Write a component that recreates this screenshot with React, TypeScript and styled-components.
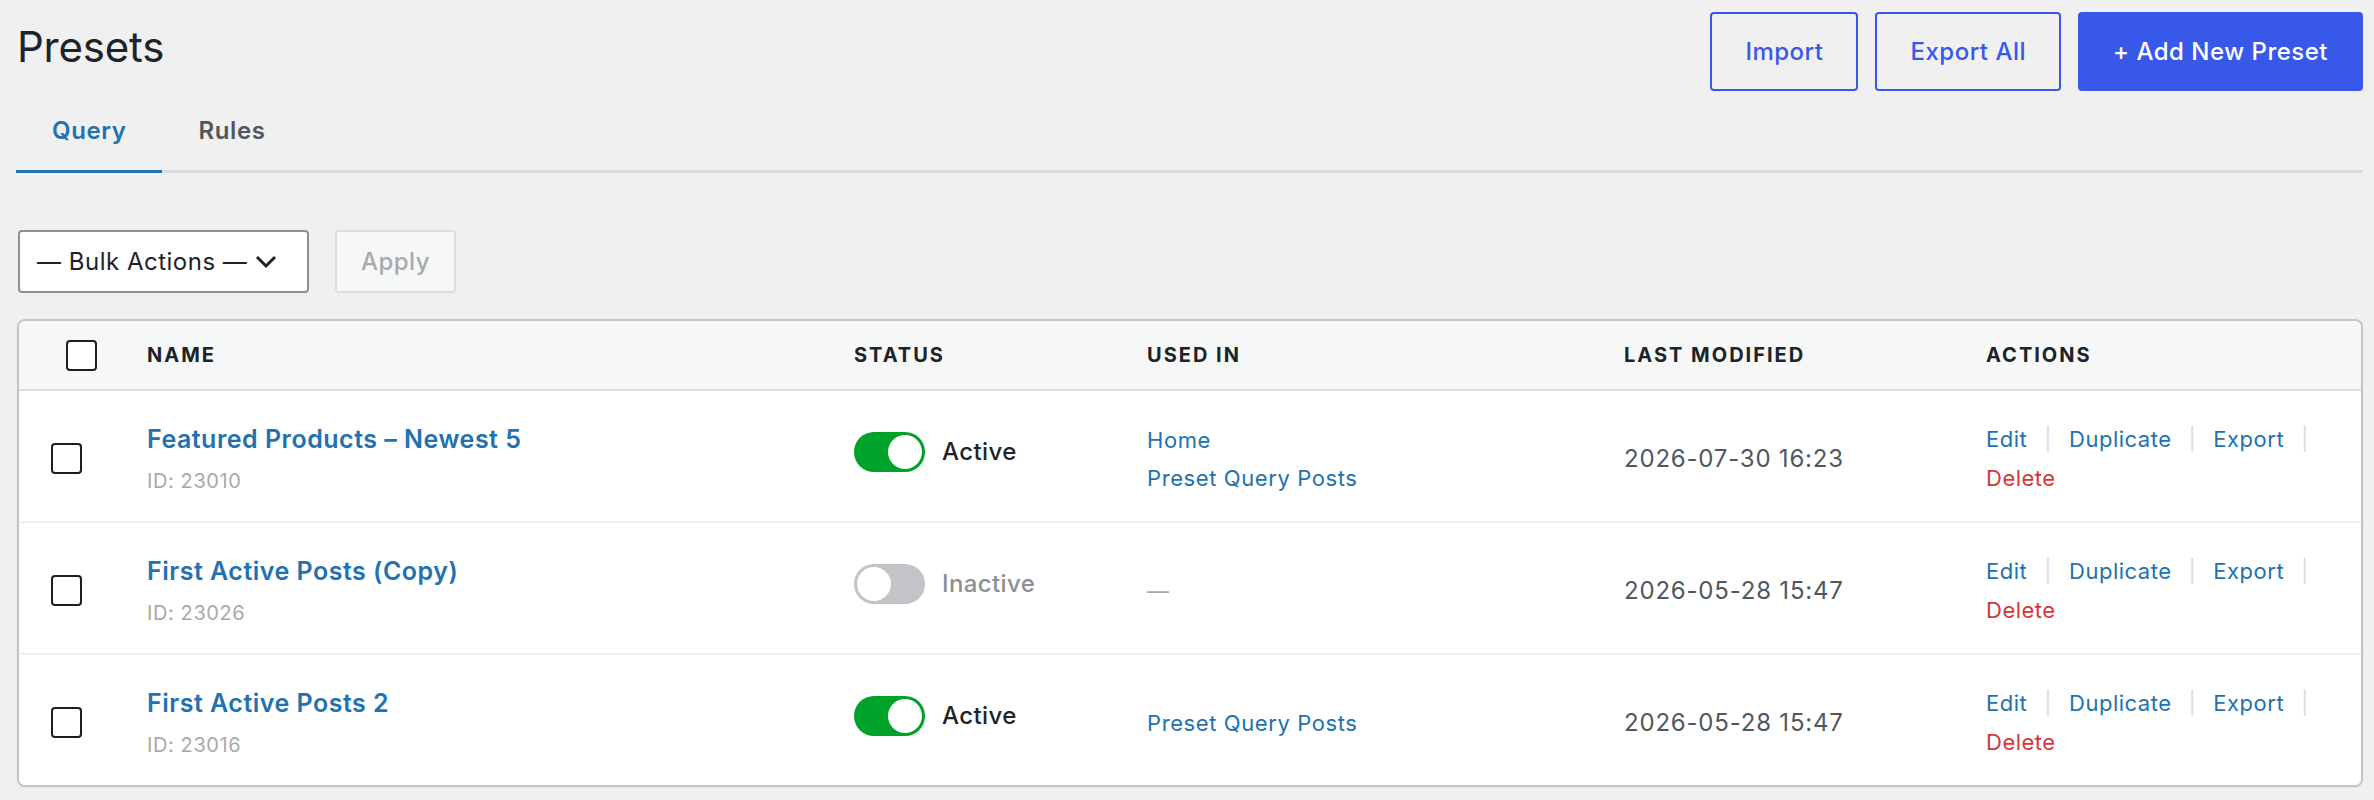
import React from 'react';
import styled, { createGlobalStyle } from 'styled-components';

const GlobalStyle = createGlobalStyle`
  html, body {
    margin: 0;
    padding: 0;
    background: #f0f0f1;
  }
  body {
    font-family: Inter, 'Noto Sans', 'Liberation Sans', sans-serif;
    color: #1d2327;
  }
  * {
    box-sizing: border-box;
  }
`;

const Root = styled.div`
  padding: 12px 11px 12px 16px;
`;

const TopBar = styled.div`
  display: flex;
  justify-content: space-between;
  align-items: flex-start;
`;

const Title = styled.h1`
  margin: 10px 0 0 1px;
  font-size: 42px;
  line-height: 50px;
  font-weight: 400;
  color: #1d2327;
  letter-spacing: -0.2px;
`;

const ButtonGroup = styled.div`
  display: flex;
  gap: 17px;
`;

const Button = styled.button<{ $primary?: boolean }>`
  height: 79px;
  padding: 0 33px;
  border: 2px solid #3858e9;
  border-radius: 4px;
  background: ${p => (p.$primary ? '#3858e9' : 'transparent')};
  color: ${p => (p.$primary ? '#ffffff' : '#3858e9')};
  font-family: inherit;
  font-size: 24px;
  font-weight: 500;
  letter-spacing: 0.5px;
  cursor: pointer;
`;

const TabBar = styled.div`
  display: flex;
  border-bottom: 3px solid #dcdcde;
`;

const Tab = styled.div<{ $active?: boolean }>`
  padding: 24px 36px 23px;
  line-height: 32px;
  font-size: 24px;
  font-weight: 600;
  letter-spacing: 0.6px;
  color: ${p => (p.$active ? '#2271b1' : '#50575e')};
  border-bottom: 3px solid ${p => (p.$active ? '#2271b1' : 'transparent')};
  margin-bottom: -3px;
`;

const Toolbar = styled.div`
  display: flex;
  gap: 26px;
  margin-top: 57px;
  margin-left: 2px;
`;

const BulkSelect = styled.div`
  width: 291px;
  height: 63px;
  display: flex;
  align-items: center;
  gap: 8px;
  padding: 0 17px;
  background: #ffffff;
  border: 2px solid #8c8f94;
  border-radius: 4px;
  font-size: 24px;
  letter-spacing: 0.5px;
  color: #1d2327;
`;

const ApplyButton = styled.button`
  width: 121px;
  height: 63px;
  border: 2px solid #dcdcde;
  border-radius: 4px;
  background: #f6f7f7;
  color: #a7aaad;
  font-family: inherit;
  font-size: 24px;
  font-weight: 500;
  letter-spacing: 0.5px;
`;

const Table = styled.div`
  margin-top: 26px;
  margin-left: 1px;
  border: 2px solid #c3c4c7;
  border-radius: 8px;
  overflow: hidden;
  background: #ffffff;
  box-shadow: 0 1px 2px rgba(0, 0, 0, 0.05);
`;

const Row = styled.div<{ $head?: boolean }>`
  display: grid;
  grid-template-columns: 128px 707px 293px 477px 362px 1fr;
  align-items: center;
  min-height: ${p => (p.$head ? '70px' : '132px')};
  padding-top: ${p => (p.$head ? '0' : '5px')};
  background: ${p => (p.$head ? '#f6f7f7' : '#ffffff')};
  border-bottom: 2px solid ${p => (p.$head ? '#dcdcde' : '#f0f0f1')};

  &:last-child {
    border-bottom: none;
    min-height: 130px;
  }
`;

const HeadCell = styled.div`
  font-size: 20px;
  font-weight: 700;
  letter-spacing: 2px;
  color: #1d2327;
`;

const Checkbox = styled.span<{ $offset: number }>`
  display: block;
  width: 31px;
  height: 31px;
  margin-left: ${p => p.$offset}px;
  border: 2px solid #1e1e1e;
  border-radius: 4px;
  background: #ffffff;
`;

const NameCell = styled.div`
  display: flex;
  flex-direction: column;
  gap: 12px;
`;

const NameLink = styled.a`
  font-size: 25px;
  line-height: 32px;
  font-weight: 600;
  letter-spacing: 0.5px;
  color: #2271b1;
  text-decoration: none;
`;

const IdText = styled.span`
  font-size: 20px;
  line-height: 28px;
  letter-spacing: 0.6px;
  color: #a7aaad;
`;

const StatusCell = styled.div`
  display: flex;
  align-items: center;
  gap: 17px;
  margin-bottom: 14px;
`;

const Toggle = styled.span<{ $on: boolean }>`
  display: flex;
  justify-content: ${p => (p.$on ? 'flex-end' : 'flex-start')};
  align-items: center;
  width: 71px;
  height: 40px;
  padding: 0 3px;
  border-radius: 20px;
  background: ${p => (p.$on ? '#00a32a' : '#c3c4c7')};
`;

const Knob = styled.span`
  width: 34px;
  height: 34px;
  border-radius: 50%;
  background: #ffffff;
`;

const StatusLabel = styled.span<{ $on: boolean }>`
  font-size: 24px;
  font-weight: 500;
  letter-spacing: 0.4px;
  color: ${p => (p.$on ? '#1d2327' : '#8c8f94')};
`;

const UsedList = styled.div`
  display: flex;
  flex-direction: column;
  font-size: 22px;
  line-height: 38px;
  letter-spacing: 0.6px;
`;

const TextLink = styled.a<{ $danger?: boolean }>`
  color: ${p => (p.$danger ? '#d63638' : '#2271b1')};
  text-decoration: none;
`;

const Dash = styled.span`
  color: #a7aaad;
`;

const DateText = styled.div`
  font-size: 24px;
  color: #50575e;
  letter-spacing: 0.8px;
`;

const Actions = styled.div`
  display: flex;
  flex-wrap: wrap;
  align-items: center;
  width: 350px;
  font-size: 22px;
  line-height: 39px;
  letter-spacing: 0.5px;
`;

const Sep = styled.span`
  color: #dcdcde;
  margin: 0 17px;
`;

interface Preset {
  id: number;
  name: string;
  active: boolean;
  usedIn: string[];
  modified: string;
}

const presets: Preset[] = [
  {
    id: 23010,
    name: 'Featured Products – Newest 5',
    active: true,
    usedIn: ['Home', 'Preset Query Posts'],
    modified: '2026-07-30 16:23',
  },
  {
    id: 23026,
    name: 'First Active Posts (Copy)',
    active: false,
    usedIn: [],
    modified: '2026-05-28 15:47',
  },
  {
    id: 23016,
    name: 'First Active Posts 2',
    active: true,
    usedIn: ['Preset Query Posts'],
    modified: '2026-05-28 15:47',
  },
];

const Chevron = () => (
  <svg width="22" height="14" viewBox="0 0 22 14" fill="none">
    <path d="M2 2l9 9 9-9" stroke="#1d2327" strokeWidth="3" />
  </svg>
);

const App = () => (
  <Root>
    <GlobalStyle />
    <TopBar>
      <Title>Presets</Title>
      <ButtonGroup>
        <Button>Import</Button>
        <Button>Export All</Button>
        <Button $primary>+ Add New Preset</Button>
      </ButtonGroup>
    </TopBar>
    <TabBar>
      <Tab $active>Query</Tab>
      <Tab>Rules</Tab>
    </TabBar>
    <Toolbar>
      <BulkSelect>
        <span>— Bulk Actions —</span>
        <Chevron />
      </BulkSelect>
      <ApplyButton>Apply</ApplyButton>
    </Toolbar>
    <Table>
      <Row $head>
        <Checkbox $offset={47} />
        <HeadCell>NAME</HeadCell>
        <HeadCell>STATUS</HeadCell>
        <HeadCell>USED IN</HeadCell>
        <HeadCell>LAST MODIFIED</HeadCell>
        <HeadCell>ACTIONS</HeadCell>
      </Row>
      {presets.map(preset => (
        <Row key={preset.id}>
          <Checkbox $offset={32} />
          <NameCell>
            <NameLink href="#">{preset.name}</NameLink>
            <IdText>ID: {preset.id}</IdText>
          </NameCell>
          <StatusCell>
            <Toggle $on={preset.active}>
              <Knob />
            </Toggle>
            <StatusLabel $on={preset.active}>
              {preset.active ? 'Active' : 'Inactive'}
            </StatusLabel>
          </StatusCell>
          <UsedList>
            {preset.usedIn.length ? (
              preset.usedIn.map(page => (
                <TextLink key={page} href="#">
                  {page}
                </TextLink>
              ))
            ) : (
              <Dash>—</Dash>
            )}
          </UsedList>
          <DateText>{preset.modified}</DateText>
          <Actions>
            <TextLink href="#">Edit</TextLink>
            <Sep>|</Sep>
            <TextLink href="#">Duplicate</TextLink>
            <Sep>|</Sep>
            <TextLink href="#">Export</TextLink>
            <Sep>|</Sep>
            <TextLink href="#" $danger>
              Delete
            </TextLink>
          </Actions>
        </Row>
      ))}
    </Table>
  </Root>
);

export default App;
